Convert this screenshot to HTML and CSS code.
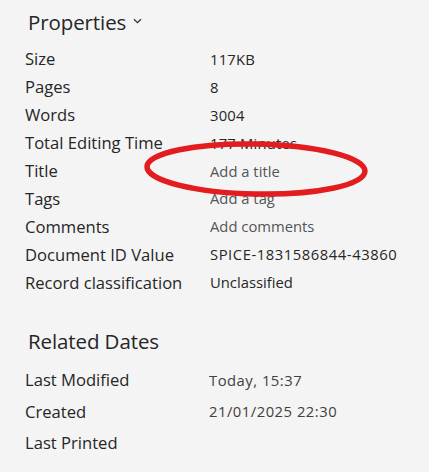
FILE: index.html
```html
<!DOCTYPE html>
<html>
<head>
<meta charset="utf-8">
<link rel="stylesheet" href="styles.css">
</head>
<body>
<div class="panel">
  <section class="group">
    <h2 class="heading">Properties <span class="chev"><svg width="9" height="6" viewBox="0 0 9 6"><path d="M1 1.2 L4.5 4.6 L8 1.2" fill="none" stroke="#333" stroke-width="1.3"/></svg></span></h2>
    <div class="props">
      <div class="label">Size</div><div class="value num">117KB</div>
      <div class="label">Pages</div><div class="value num">8</div>
      <div class="label">Words</div><div class="value num">3004</div>
      <div class="label">Total Editing Time</div><div class="value num">177 Minutes</div>
      <div class="label">Title</div><div class="value muted">Add a title</div>
      <div class="label">Tags</div><div class="value muted">Add a tag</div>
      <div class="label">Comments</div><div class="value muted">Add comments</div>
      <div class="label">Document ID Value</div><div class="value id">SPICE-1831586844-43860</div>
      <div class="label">Record classification</div><div class="value">Unclassified</div>
    </div>
  </section>
  <section class="group dates">
    <h2 class="heading">Related Dates</h2>
    <div class="props date-rows">
      <div class="label">Last Modified</div><div class="value date">Today, 15:37</div>
      <div class="label">Created</div><div class="value date">21/01/2025 22:30</div>
      <div class="label">Last Printed</div><div class="value"></div>
    </div>
  </section>
  <svg class="mark" width="429" height="472" viewBox="0 0 429 472">
    <ellipse cx="256" cy="169" rx="109" ry="25" fill="none" stroke="#e31c1f" stroke-width="5.5" transform="rotate(1.2 256 169)"/>
  </svg>
</div>
</body>
</html>
```
FILE: styles.css
```css
html, body {
  margin: 0;
  padding: 0;
  background: #f4f4f4;
}
body {
  font-family: "Open Sans", "Noto Sans", sans-serif;
  color: #262626;
}
.panel {
  position: relative;
  width: 429px;
  height: 472px;
  overflow: hidden;
}
.group {
  padding-left: 25px;
}
.heading {
  margin: 0;
  padding-left: 3px;
  height: 45px;
  line-height: 44px;
  font-size: 20.5px;
  font-weight: 400;
  color: #262626;
  letter-spacing: -0.1px;
}
.chev {
  display: inline-block;
  vertical-align: middle;
  margin-left: 2px;
  position: relative;
  top: -4px;
}
.chev svg { display: block; }
.props {
  display: grid;
  grid-template-columns: 185px 1fr;
  grid-auto-rows: 27.9px;
  align-items: center;
}
.label {
  font-size: 16.6px;
  color: #262626;
  white-space: nowrap;
}
.value {
  font-size: 14.8px;
  color: #262626;
  white-space: nowrap;
}
.value.num {
  letter-spacing: 0.2px;
}
.value.id {
  letter-spacing: 0.55px;
}
.value.muted {
  color: #555555;
}
.value.date {
  color: #404040;
  letter-spacing: 0.5px;
}
.dates {
  margin-top: 29px;
}
.dates .heading {
  height: 36px;
  line-height: 32px;
}
.date-rows {
  grid-template-columns: 184px 1fr;
  grid-auto-rows: 31.4px;
  margin-top: 3px;
}
.mark {
  position: absolute;
  left: 0;
  top: 0;
  pointer-events: none;
}
```
